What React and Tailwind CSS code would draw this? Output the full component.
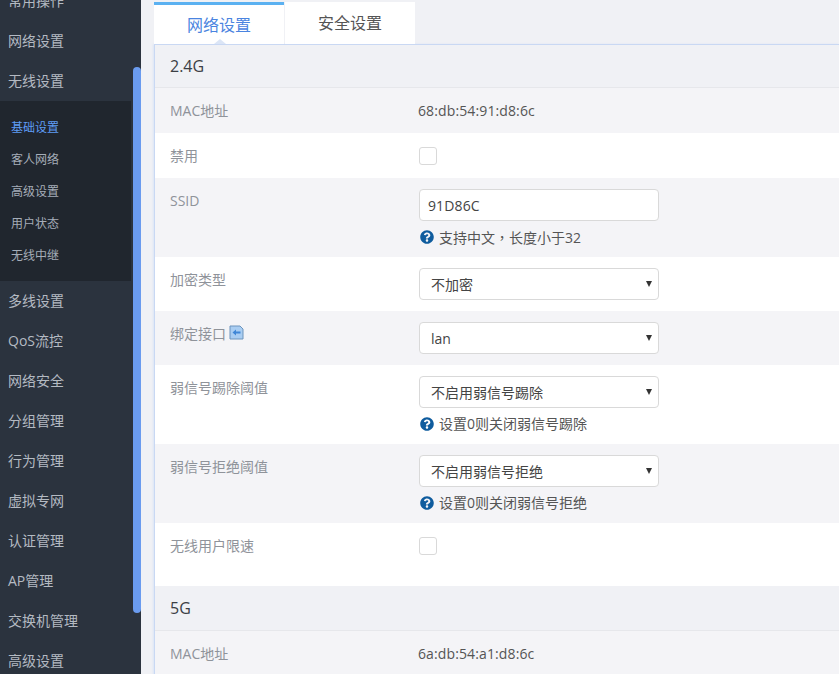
import { FaQuestionCircle } from 'react-icons/fa';

const topMenu = ['常用操作', '网络设置', '无线设置'];
const subMenu = ['基础设置', '客人网络', '高级设置', '用户状态', '无线中继'];
const bottomMenu = ['多线设置', 'QoS流控', '网络安全', '分组管理', '行为管理', '虚拟专网', '认证管理', 'AP管理', '交换机管理', '高级设置'];

const MenuItem = ({ label }) => (
  <div className="h-10 pl-2 flex items-center text-sm text-[#b4bac2]">{label}</div>
);

const Sidebar = () => (
  <div className="relative w-[141px] shrink-0 h-full overflow-hidden bg-[#2b333e]">
    <div className="-mt-[19px] w-[131px]">
      {topMenu.map((m) => (
        <MenuItem key={m} label={m} />
      ))}
      <div className="bg-[#20262e] py-2.5">
        {subMenu.map((m, i) => (
          <div
            key={m}
            className={`h-8 pl-[11px] pt-px flex items-center text-xs ${i === 0 ? 'text-[#5e9cf5]' : 'text-[#a5adb8]'}`}
          >
            {m}
          </div>
        ))}
      </div>
      {bottomMenu.map((m) => (
        <MenuItem key={m} label={m} />
      ))}
    </div>
    {/* scrollbar */}
    <div className="absolute left-[133px] top-[67px] w-2 h-[546px] rounded-full bg-[#6a9bef]" />
  </div>
);

const Tabs = () => (
  <div className="relative flex h-[42px] gap-px">
    <div className="w-[130px] bg-white border-t-[3px] border-[#5bb1f1] flex items-center justify-center text-base text-[#4a84e0]">
      网络设置
    </div>
    <div className="w-[130px] bg-white flex items-center justify-center text-base text-[#555]">
      安全设置
    </div>
    <div className="absolute left-[60px] bottom-0 w-0 h-0 border-x-[6px] border-x-transparent border-b-[5px] border-b-[#dbe5f6]" />
  </div>
);

const SectionHead = ({ title, className }) => (
  <div className={`pl-[15px] flex items-center bg-[#f0f1f5] border-b border-[#e6e7eb] text-base text-[#3c3f45] ${className}`}>
    {title}
  </div>
);

const Row = ({ label, gray, height, center, children }) => (
  <div className={`flex ${height} ${gray ? 'bg-[#f4f4f7]' : 'bg-white'}`}>
    <div className={`w-[264px] shrink-0 pl-[15px] flex text-sm text-[#8f939a] ${center ? 'items-center' : 'pt-[13px]'}`}>
      {label}
    </div>
    <div className={`flex-1 ${center ? 'flex items-center' : 'pt-[11px]'}`}>{children}</div>
  </div>
);

const Hint = ({ children }) => (
  <div className="mt-2 h-4 flex items-center gap-[5px] pl-px text-sm text-[#555]">
    <FaQuestionCircle className="text-[#0f5c9e] text-sm" />
    <span>{children}</span>
  </div>
);

const Dropdown = ({ value }) => (
  <div className="relative w-60">
    <select
      defaultValue={value}
      className="appearance-none block w-full h-8 pl-[11px] pt-px bg-white border border-[#d9d9d9] rounded text-sm text-[#444]"
    >
      <option>{value}</option>
    </select>
    <div className="absolute right-[7px] top-[13px] w-0 h-0 border-x-[3.5px] border-x-transparent border-t-[6px] border-t-[#333]" />
  </div>
);

const Check = () => (
  <input type="checkbox" className="appearance-none block w-[18px] h-[18px] bg-white border border-[#d9d9d9] rounded-[3px]" />
);

const BindIcon = () => (
  <svg width="15" height="15" viewBox="0 0 15 15" className="ml-[3px] mt-px">
    <path d="M1 1H11L14 4V14H1Z" fill="#a9cdf2" stroke="#6c94bd" />
    <path d="M3.5 7.5L7 4.5V6.5H11.5V8.5H7V10.5Z" fill="#3f86d6" />
  </svg>
);

const App = () => (
  <div className="flex h-[674px] overflow-hidden bg-[#f0f1f5] font-['Open_Sans','Noto_Sans_CJK_SC',sans-serif]">
    <Sidebar />
    <div className="flex-1 pl-[13px] pt-[2px] min-w-0">
      <Tabs />
      <div className="border-t border-l border-[#c9d8f3] shadow-[-1px_0_2px_#dbe5f6]">
        <SectionHead title="2.4G" className="h-[43px]" />
        <Row label="MAC地址" gray height="h-[45px]" center>
          <span className="-ml-px text-sm tracking-[0.12px] text-[#555]">68:db:54:91:d8:6c</span>
        </Row>
        <Row label="禁用" height="h-[45px]" center>
          <Check />
        </Row>
        <Row label="SSID" gray height="h-[79px]">
          <input
            defaultValue="91D86C"
            className="block w-60 h-8 px-2 bg-white border border-[#d9d9d9] rounded text-sm tracking-[0.12px] text-[#444]"
          />
          <Hint>
            支持中文<span className="font-['Noto_Sans_CJK_TC']">，</span>长度小于32
          </Hint>
        </Row>
        <Row label="加密类型" height="h-[54px]">
          <Dropdown value="不加密" />
        </Row>
        <Row
          label={
            <>
              绑定接口
              <BindIcon />
            </>
          }
          gray
          height="h-[54px]"
        >
          <Dropdown value="lan" />
        </Row>
        <Row label="弱信号踢除阈值" height="h-[79px]">
          <Dropdown value="不启用弱信号踢除" />
          <Hint>设置0则关闭弱信号踢除</Hint>
        </Row>
        <Row label="弱信号拒绝阈值" gray height="h-[79px]">
          <Dropdown value="不启用弱信号拒绝" />
          <Hint>设置0则关闭弱信号拒绝</Hint>
        </Row>
        <Row label="无线用户限速" height="h-[63px]">
          <div className="pt-[3px]">
            <Check />
          </div>
        </Row>
        <SectionHead title="5G" className="h-[45px]" />
        <Row label="MAC地址" gray height="h-[45px]" center>
          <span className="-ml-px text-sm tracking-[0.12px] text-[#555]">6a:db:54:a1:d8:6c</span>
        </Row>
      </div>
    </div>
  </div>
);

export default App;
